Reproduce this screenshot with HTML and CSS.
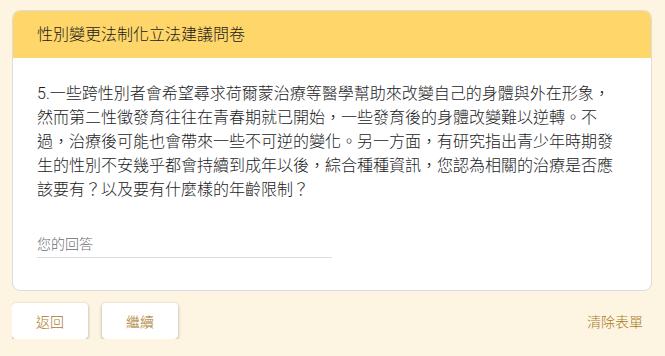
FILE: index.html
```html
<!DOCTYPE html>
<html lang="zh-Hant">
<head>
    <meta charset="UTF-8">
    <meta name="viewport" content="width=device-width, initial-scale=1.0">
    <title>性別變更法制化立法建議問卷</title>
    <link rel="stylesheet" href="styles.css">
</head>
<body>
    <div class="form-card">
        <div class="form-header">性別變更法制化立法建議問卷</div>
        <div class="form-body">
            <div class="question-text">5.一些跨性別者會希望尋求荷爾蒙治療等醫學幫助來改變自己的身體與外在形象，然而第二性徵發育往往在青春期就已開始，一些發育後的身體改變難以逆轉。不過，治療後可能也會帶來一些不可逆的變化。另一方面，有研究指出青少年時期發生的性別不安幾乎都會持續到成年以後，綜合種種資訊，您認為相關的治療是否應該要有？以及要有什麼樣的年齡限制？</div>
            <div class="answer">
                <span class="placeholder">您的回答</span>
            </div>
        </div>
    </div>
    <div class="form-footer">
        <div class="nav-buttons">
            <button class="nav-btn">返回</button>
            <button class="nav-btn">繼續</button>
        </div>
        <button class="clear-btn">清除表單</button>
    </div>
</body>
</html>
```

FILE: styles.css
```css
:root {
  --page-bg: #fdf5e2;
  --header-yellow: #fed669;
  --text-dark: #1a1b1e;
  --text-muted: #6a6e73;
  --line-gray: #dadce0;
  --accent: #a87a1f;
}

html {
  background: var(--page-bg);
}

body {
  margin: 10px 13px 0 12px;
  font-family: Roboto, "Noto Sans CJK JP", "Noto Sans CJK TC", sans-serif;
  font-weight: 300;
  color: var(--text-dark);
}

.form-card {
  background: #ffffff;
  border: 1px solid var(--line-gray);
  border-radius: 8px;
  overflow: hidden;
}

.form-header {
  background: var(--header-yellow);
  padding: 12px 24px;
  font-size: 16px;
  line-height: 23px;
  color: var(--text-dark);
}

.form-body {
  padding: 24px 30px 32px 24px;
}

.question-text {
  font-size: 16px;
  line-height: 24px;
  letter-spacing: 0;
}

.answer {
  margin-top: 26px;
  width: 295px;
  padding: 6px 0 3px;
  border-bottom: 1px solid var(--line-gray);
  font-size: 14px;
  line-height: 20px;
}

.placeholder {
  color: var(--text-muted);
}

.form-footer {
  margin-top: 12px;
  display: flex;
  justify-content: space-between;
  align-items: center;
}

.nav-buttons {
  display: flex;
  gap: 14px;
}

.nav-btn {
  height: 36px;
  padding: 0 24px;
  background: #ffffff;
  border: none;
  border-radius: 4px;
  box-shadow: 0 1px 2px 0 rgba(60, 64, 67, 0.3),
              0 1px 3px 1px rgba(60, 64, 67, 0.15);
  font-family: inherit;
  font-weight: inherit;
  font-size: 14px;
  color: var(--accent);
  cursor: pointer;
}

.clear-btn {
  height: 36px;
  padding: 0 9px;
  background: transparent;
  border: none;
  font-family: inherit;
  font-weight: inherit;
  font-size: 14px;
  color: var(--accent);
  cursor: pointer;
}
```
